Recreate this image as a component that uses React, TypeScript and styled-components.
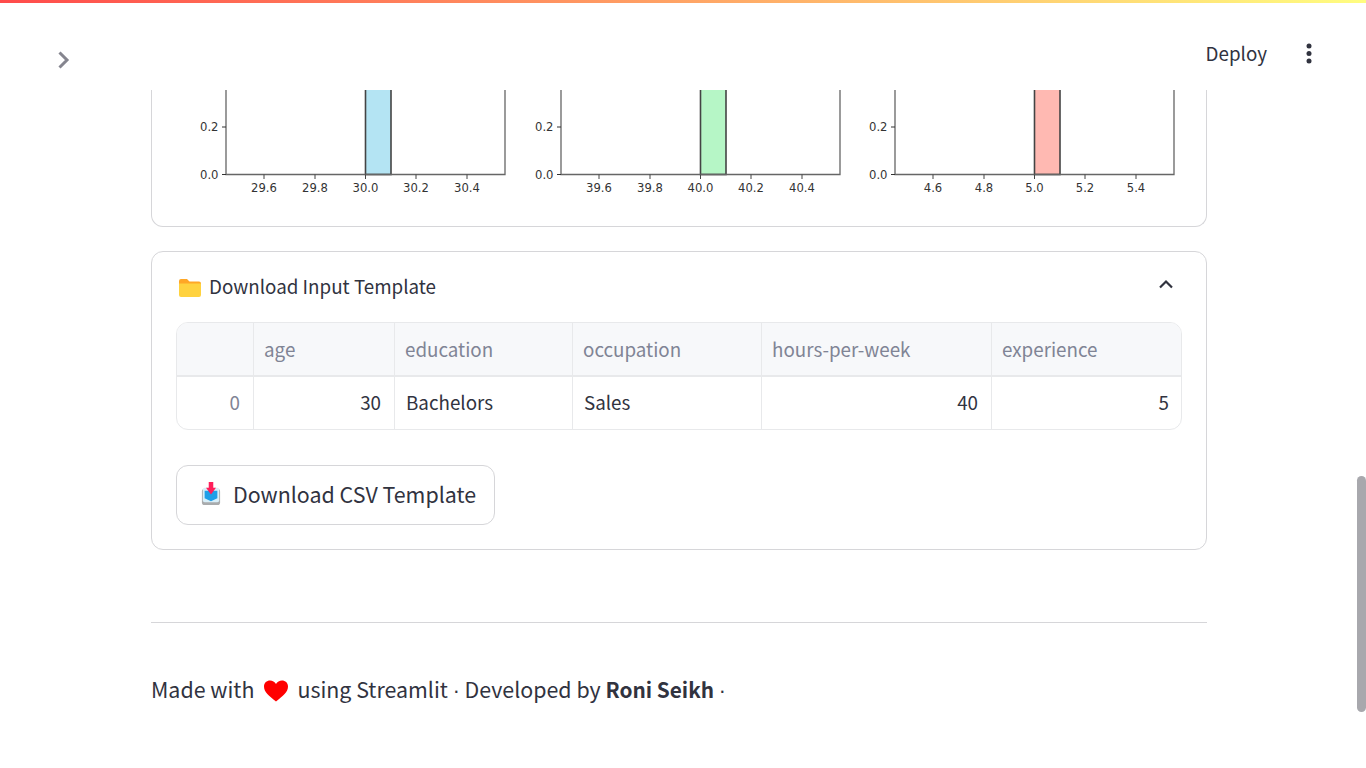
import styled, { createGlobalStyle } from "styled-components";

const GlobalStyle = createGlobalStyle`
    html, body {
        margin: 0;
        padding: 0;
        background: #fff;
    }
    * {
        box-sizing: border-box;
    }
`
const Page = styled.div`
    position: relative;
    width: 1366px;
    height: 768px;
    overflow: hidden;
    background: #fff;
    color: #31333f;
    font-family: "Noto Sans CJK SC", "Noto Sans", sans-serif;
`
const Decoration = styled.div`
    height: 3px;
    background: linear-gradient(90deg, rgb(255, 75, 75), rgb(255, 253, 128));
`
const Header = styled.header`
    height: 87px;
    display: flex;
    justify-content: space-between;
    padding: 40px 45px 0 52px;
`
const Collapse = styled.button`
    width: 24px;
    height: 34px;
    padding: 0;
    border: 0;
    background: none;
    display: flex;
    align-items: flex-start;
`
const Actions = styled.div`
    display: flex;
    align-items: flex-start;
    gap: 30px;
    margin-top: -4px;
    font-size: 18.8px;
    line-height: 28px;
`
const Main = styled.main`
    width: 1056px;
    margin-left: 151px;
`
const Card = styled.section<{ $clipped?: boolean }>`
    border: 1px solid #d6d6d9;
    border-top: ${(p) => (p.$clipped ? "0" : "1px solid #d6d6d9")};
    border-radius: ${(p) => (p.$clipped ? "0 0 12px 12px" : "12px")};
`
const ChartCard = styled(Card)`
    height: 137px;
    padding-left: 24px;
    display: grid;
    grid-template-columns: repeat(3, 334.67px);
    align-content: start;
`
const ExpanderCard = styled(Card)`
    margin-top: 24px;
    height: 299px;
    padding: 0 24px;
`
const Summary = styled.div`
    height: 70px;
    display: flex;
    align-items: center;
    padding-left: 3px;
    gap: 8px;
    font-size: 18.8px;
`
const SummaryLabel = styled.span`
    flex: 1;
    margin-top: -4px;
`
const Table = styled.table`
    width: 1006px;
    height: 108px;
    table-layout: fixed;
    border-collapse: separate;
    border-spacing: 0;
    border: 1px solid #e8e9eb;
    border-radius: 12px;
    overflow: hidden;
    font-size: 18.8px;
`
const HeadCell = styled.th`
    height: 54px;
    padding: 0 10px 2px;
    background: #f7f8fa;
    color: #808495;
    font-weight: 400;
    text-align: left;
    border-right: 1px solid #e8e9eb;
    border-bottom: 2px solid #e8e9eb;
    &:last-child {
        border-right: 0;
    }
`
const Cell = styled.td<{ $numeric?: boolean; $index?: boolean }>`
    padding: 0 13px 4px 11px;
    text-align: ${(p) => (p.$numeric ? "right" : "left")};
    color: ${(p) => (p.$index ? "#808495" : "#31333f")};
    border-right: 1px solid #e8e9eb;
    &:last-child {
        border-right: 0;
        padding-right: 12px;
    }
`
const DownloadButton = styled.button`
    margin-top: 35px;
    width: 319px;
    height: 60px;
    padding: 0 0 3px 24px;
    display: flex;
    align-items: center;
    gap: 12px;
    background: #fff;
    border: 1px solid #d6d6d9;
    border-radius: 12px;
    color: #31333f;
    font-family: inherit;
    font-size: 21.4px;
    white-space: nowrap;
`
const Rule = styled.hr`
    margin: 72px 0 0;
    border: 0;
    border-top: 1px solid #d6d6d9;
`
const Footer = styled.p`
    margin: 48px 0 0;
    font-size: 21.4px;
    line-height: 36px;
`
const Heart = styled.svg`
    margin: 0 9px 0 10px;
    vertical-align: -4px;
`
const Author = styled.strong`
    font-size: 20.8px;
`
const Dot = styled.span`
    font-family: "Liberation Sans", sans-serif;
`
const ScrollThumb = styled.div`
    position: absolute;
    top: 476px;
    right: 0;
    width: 9px;
    height: 236px;
    border-radius: 5px;
    background: #a8a8ad;
`

type ChartProps = { ticks: string[]; fill: string };

const tickX = [88, 139, 189.5, 240, 291];

function Chart({ ticks, fill }: ChartProps) {
    return (
        <svg width="334" height="110" viewBox="0 0 334 110" fontFamily="DejaVu Sans, sans-serif" fontSize="11.6" fill="#333">
            <rect x="189.5" y="-6" width="25.5" height="90.5" fill={fill} stroke="#444" strokeWidth="1.6" />
            <path d="M50 0V84.5H329V0" fill="none" stroke="#666" strokeWidth="1.3" />
            <path d="M46 37H50M46 84.5H50" stroke="#333" strokeWidth="1" />
            <text x="42.500" y="41" textAnchor="end">0.2</text>
            <text x="42.500" y="88.5" textAnchor="end">0.0</text>
            {ticks.map((tick, i) => (
                <g key={tick}>
                    <path d={`M${tickX[i]} 84.5V89`} stroke="#444" strokeWidth="1" />
                    <text x={tickX[i]} y="102" textAnchor="middle">{tick}</text>
                </g>
            ))}
        </svg>
    );
}

const charts: ChartProps[] = [
    { ticks: ["29.6", "29.8", "30.0", "30.2", "30.4"], fill: "#b4e4f3" },
    { ticks: ["39.6", "39.8", "40.0", "40.2", "40.4"], fill: "#b6f6c6" },
    { ticks: ["4.6", "4.8", "5.0", "5.2", "5.4"], fill: "#ffb9b2" },
];

const columns = [
    { name: "", width: 77 },
    { name: "age", width: 141 },
    { name: "education", width: 178 },
    { name: "occupation", width: 189 },
    { name: "hours-per-week", width: 230 },
    { name: "experience", width: 189 },
];

function App() {
    return (
        <Page>
            <GlobalStyle />
            <Decoration />
            <Header>
                <Collapse aria-label="Expand sidebar">
                    <svg width="24" height="34" viewBox="0 0 24 34" fill="none">
                        <path d="M7.500 9.500L15 17L7.500 24.500" stroke="#85858f" strokeWidth="3" />
                    </svg>
                </Collapse>
                <Actions>
                    <span>Deploy</span>
                    <svg width="24" height="30" viewBox="0 0 24 30" fill="#31333f">
                        <circle cx="12" cy="7" r="2.5" />
                        <circle cx="12" cy="14.5" r="2.5" />
                        <circle cx="12" cy="22" r="2.5" />
                    </svg>
                </Actions>
            </Header>
            <Main>
                <ChartCard $clipped>
                    {charts.map((chart) => (
                        <Chart key={chart.ticks[0]} ticks={chart.ticks} fill={chart.fill} />
                    ))}
                </ChartCard>
                <ExpanderCard>
                    <Summary>
                        <svg width="22" height="22" viewBox="0 0 22 22">
                            <path d="M0 5a2 2 0 0 1 2-2h6l2.5 2.5H20a2 2 0 0 1 2 2V10H0z" fill="#ffa726" />
                            <path d="M0 7.5h22V19a2 2 0 0 1-2 2H2a2 2 0 0 1-2-2z" fill="#ffd23f" />
                        </svg>
                        <SummaryLabel>Download Input Template</SummaryLabel>
                        <svg width="24" height="24" viewBox="0 0 24 24" fill="none">
                            <path d="M6 15.5L12 9.5L18 15.5" transform="translate(-4 -3)" stroke="#31333f" strokeWidth="2.2" />
                        </svg>
                    </Summary>
                    <Table>
                        <colgroup>
                            {columns.map((column) => (
                                <col key={column.name} width={column.width} />
                            ))}
                        </colgroup>
                        <thead>
                            <tr>
                                {columns.map((column) => (
                                    <HeadCell key={column.name}>{column.name}</HeadCell>
                                ))}
                            </tr>
                        </thead>
                        <tbody>
                            <tr>
                                <Cell $numeric $index>0</Cell>
                                <Cell $numeric>30</Cell>
                                <Cell>Bachelors</Cell>
                                <Cell>Sales</Cell>
                                <Cell $numeric>40</Cell>
                                <Cell $numeric>5</Cell>
                            </tr>
                        </tbody>
                    </Table>
                    <DownloadButton>
                        <svg width="20" height="23" viewBox="0 0 22 24" preserveAspectRatio="none">
                            <rect x="1" y="7" width="20" height="17" rx="3" fill="#a9abad" />
                            <rect x="2" y="6" width="18" height="15" rx="2" fill="#d8eef8" />
                            <path d="M4 9h14v8l-7 3-7-3z" fill="#1f9fe8" />
                            <path d="M8.5 0h5v6h3L11 13 5.500 6h3z" fill="#ff1f5a" />
                        </svg>
                        Download CSV Template
                    </DownloadButton>
                </ExpanderCard>
                <Rule />
                <Footer>
                    Made with
                    <Heart width="24" height="22" viewBox="0 0 24 22" role="img" aria-label="heart">
                        <path d="M12 21.500C5 16 0 12 0 6.500 0 2.800 2.800 0.500 6 0.500c2.500 0 4.700 1.300 6 3.500 1.300-2.200 3.500-3.500 6-3.500 3.200 0 6 2.300 6 6 0 5.500-5 9.500-12 15z" fill="#ff0000" />
                    </Heart>
                    using Streamlit <Dot>·</Dot> Developed by <Author>Roni Seikh</Author> <Dot>·</Dot>
                </Footer>
            </Main>
            <ScrollThumb />
        </Page>
    );
}

export default App;
